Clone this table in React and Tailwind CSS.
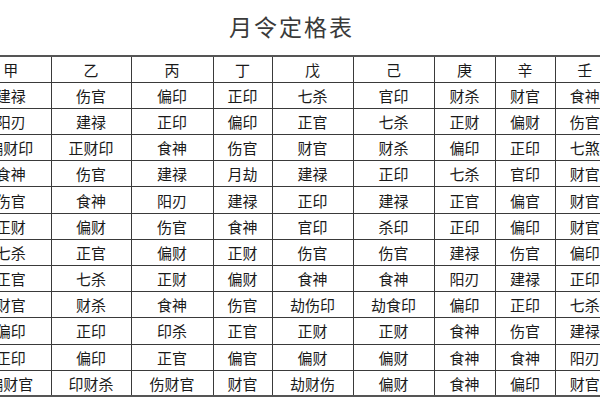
import React from "react";

const widths = [81, 80, 82, 59, 81, 81, 61, 60, 60];

const header = ["甲", "乙", "丙", "丁", "戊", "己", "庚", "辛", "壬"];

const rows = [
  ["建禄", "伤官", "偏印", "正印", "七杀", "官印", "财杀", "财官", "食神"],
  ["阳刃", "建禄", "正印", "偏印", "正官", "七杀", "正财", "偏财", "伤官"],
  ["偏财印", "正财印", "食神", "伤官", "财官", "财杀", "偏印", "正印", "七煞"],
  ["食神", "伤官", "建禄", "月劫", "建禄", "正印", "七杀", "官印", "财官"],
  ["伤官", "食神", "阳刃", "建禄", "正印", "建禄", "正官", "偏官", "财官"],
  ["正财", "偏财", "伤官", "食神", "官印", "杀印", "正印", "偏印", "财官"],
  ["七杀", "正官", "偏财", "正财", "伤官", "伤官", "建禄", "伤官", "偏印"],
  ["正官", "七杀", "正财", "偏财", "食神", "食神", "阳刃", "建禄", "正印"],
  ["财官", "财杀", "食神", "伤官", "劫伤印", "劫食印", "偏印", "正印", "七杀"],
  ["偏印", "正印", "印杀", "正官", "正财", "正财", "食神", "伤官", "建禄"],
  ["正印", "偏印", "正官", "偏官", "偏财", "偏财", "食神", "食神", "阳刃"],
  ["偏财官", "印财杀", "伤财官", "财官", "劫财伤", "偏财", "食神", "偏印", "财官"],
];

const Cell = ({ children }) => (
  <td className="h-[26.2px] border border-[#3a3a3a] p-0 text-center align-middle leading-none">
    {children}
  </td>
);

const App = () => {
  return (
    <div
      className="relative h-[400px] w-[600px] overflow-hidden bg-white"
      style={{ fontFamily: '"Noto Sans CJK SC", "Noto Sans", sans-serif' }}
    >
      {/* Title */}
      <div className="ml-[-31px] flex h-[55px] w-[645px] items-center justify-center pb-[3px]">
        <h1 className="text-[23px] font-normal tracking-[2px] text-[#3a3a3a]">
          月令定格表
        </h1>
      </div>

      {/* Table */}
      <table className="ml-[-31px] w-[645px] table-fixed border-collapse border-2 border-[#555] text-[15px] text-[#1a1a1a]">
        <colgroup>
          {widths.map((w, i) => (
            <col key={i} style={{ width: w }} />
          ))}
        </colgroup>
        <thead>
          <tr>
            {header.map((h) => (
              <Cell key={h}>{h}</Cell>
            ))}
          </tr>
        </thead>
        <tbody>
          {rows.map((row, r) => (
            <tr key={r}>
              {row.map((c, i) => (
                <Cell key={i}>{c}</Cell>
              ))}
            </tr>
          ))}
        </tbody>
      </table>
    </div>
  );
};

export default App;
